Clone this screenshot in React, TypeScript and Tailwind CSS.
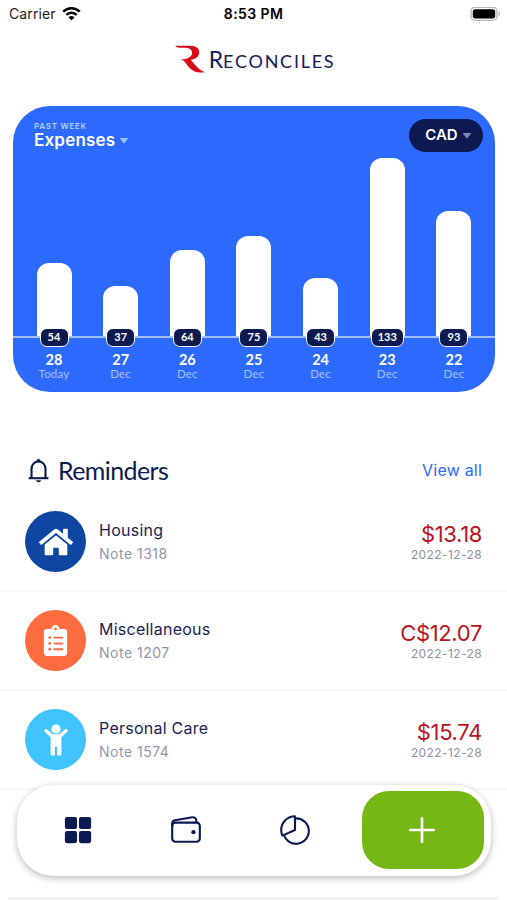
import React, { ReactElement } from 'react';
import { FaClipboardList, FaHome } from 'react-icons/fa';
import { IoAdd, IoGrid, IoPieChartOutline, IoWalletOutline } from 'react-icons/io5';

const CaretDown = ({ className }: { className: string }) => (
  <svg className={className} viewBox="0 0 10 6" fill="currentColor">
    <path d="M0.6 0h8.8L5 5.8z" />
  </svg>
);

const WifiIcon = () => (
  <svg className="-mt-[2px] ml-[6px] h-[15px] w-[19px]" viewBox="0 0 19 15" fill="none" stroke="#000" strokeWidth={2.5}>
    <path d="M1.2 5.6C5.9 1 13.1 1 17.8 5.6" />
    <path d="M4.3 8.8C7.3 5.9 11.7 5.9 14.7 8.8" />
    <path d="M9.5 14.4L6.5 11.3C8.2 9.7 10.8 9.7 12.5 11.3Z" fill="#000" stroke="none" />
  </svg>
);

const BatteryIcon = () => (
  <svg className="h-[15px] w-[31px]" viewBox="0 0 31 15">
    <rect x="1" y="0.4" width="26" height="13" rx="4" fill="#fff" stroke="#b8b8b8" strokeWidth={1.4} />
    <rect x="2.8" y="2.2" width="22.4" height="9.4" rx="2.4" fill="#000" />
    <path d="M28.6 4.7C30.6 5.3 30.6 8.5 28.6 9.1Z" fill="#b8b8b8" />
  </svg>
);

const BellIcon = () => (
  <svg className="h-[25px] w-[21px]" viewBox="0 0 21 25" fill="none" stroke="currentColor" strokeWidth={2.1}>
    <path d="M0.6 20.2H20.4" />
    <path d="M3.5 20V11C3.5 6.8 6.4 3.4 10.5 3.4C14.6 3.4 17.5 6.8 17.5 11V20" />
    <path d="M8.2 3.6L10.5 0.8L12.8 3.6Z" fill="currentColor" strokeWidth={0.8} />
    <path d="M8 22.2H13C12.6 24.8 8.4 24.8 8 22.2Z" fill="currentColor" stroke="none" />
  </svg>
);

const PersonIcon = () => (
  <svg className="h-[32px] w-[24px]" viewBox="0 0 24 32" fill="currentColor">
    <circle cx="12" cy="5" r="4.6" />
    <path
      d="M2.1 6.7L7.9 12H16.1L21.9 6.7"
      fill="none"
      stroke="currentColor"
      strokeWidth={3.4}
      strokeLinecap="round"
      strokeLinejoin="round"
    />
    <path d="M6.6 11H17.4V30.2C17.4 31.9 13 31.9 13 30.2V22.8H11V30.2C11 31.9 6.6 31.9 6.6 30.2Z" />
  </svg>
);

const StatusBar = () => (
  <div className="grid h-7 grid-cols-3 items-center pl-[9px] pr-[9px] text-[14px]">
    <div className="flex items-center">
      <span className="-mt-px tracking-[0.1px] text-[#222]">Carrier</span>
      <WifiIcon />
    </div>
    <span className="-mt-px text-center text-[14px] font-semibold tracking-[0.4px] text-black">8:53 PM</span>
    <div className="-mr-[3px] flex justify-end">
      <BatteryIcon />
    </div>
  </div>
);

const Logo = () => (
  <div className="flex h-[62px] items-center justify-center pl-[2px]">
    <svg className="h-[28px] w-[32px]" viewBox="0 0 32 29" fill="#d80a18">
      <path d="M0.5 0.8H16C22 0.8 25.8 3.4 25.6 7.8C25.4 12.2 21.5 14.7 17 15.5C20 18.8 24 25.5 31.5 28.2C24.5 29.3 19.5 28 16 24.2C12.3 20 11 16.3 6.5 14.7C12.5 15.2 18.2 12.6 18.2 8C18.2 4 14 2.8 9.5 2.8C5.8 2.8 2 3 0.5 0.8Z" />
    </svg>
    <span className="ml-[3px] font-['Lato',sans-serif] text-[23px] leading-none text-[#15205c]">
      R<span className="text-[18px] tracking-[1.75px]">ECONCILES</span>
    </span>
  </div>
);

const days = [
  { value: 54, height: 73, day: '28', label: 'Today' },
  { value: 37, height: 50, day: '27', label: 'Dec' },
  { value: 64, height: 86, day: '26', label: 'Dec' },
  { value: 75, height: 100, day: '25', label: 'Dec' },
  { value: 43, height: 58, day: '24', label: 'Dec' },
  { value: 133, height: 178, day: '23', label: 'Dec' },
  { value: 93, height: 125, day: '22', label: 'Dec' },
];

const ExpensesCard = () => (
  <div className="relative mx-[13px] mr-3 mt-4 flex h-[286px] flex-col rounded-[37px] bg-[#2b6afd]">
    <div className="absolute inset-x-0 top-0 flex items-start justify-between pl-[21px] pr-3 pt-[13px] text-white">
      <div className="pt-[3px]">
        <div className="text-[8px] font-semibold leading-[9px] tracking-[0.75px] text-[#b9d0ff]">PAST WEEK</div>
        <div className="flex items-center text-[17px] font-semibold leading-[19px] tracking-[0.2px]">
          Expenses
          <CaretDown className="ml-1 h-[6px] w-[10px] text-[#9dbcff]" />
        </div>
      </div>
      <div className="flex h-[33px] w-[74px] items-center justify-center rounded-full bg-[#0c1a51] pl-[5px] text-[15px] font-semibold">
        CAD
        <CaretDown className="ml-1 h-[6px] w-[10px] text-[#7f8bb8]" />
      </div>
    </div>
    <div className="flex h-[232px] items-end justify-between border-b-2 border-[#a0bffe] px-[23.5px]">
      {days.map((item) => (
        <div key={item.day} className="w-[35px] rounded-t-[12px] bg-white" style={{ height: item.height }} />
      ))}
    </div>
    <div className="relative -mt-[10px] flex justify-between px-[23.5px] font-['Lato',sans-serif]">
      {days.map((item) => (
        <div key={item.day} className="flex w-[35px] flex-col items-center">
          <div className="flex h-[19px] min-w-[29px] items-center justify-center rounded-[7px] border border-white bg-[#0c1a51] px-[6px] text-[11px] font-bold text-white">
            {item.value}
          </div>
          <div className="mt-[4px] text-[14.5px] font-bold leading-[18px] text-white">{item.day}</div>
          <div className="-mt-px text-[11.5px] leading-[12px] tracking-[0.2px] text-[#a5c2ff]">{item.label}</div>
        </div>
      ))}
    </div>
  </div>
);

const reminders: { icon: ReactElement; color: string; title: string; note: string; amount: string }[] = [
  {
    icon: <FaHome className="h-[34px] w-[34px]" />,
    color: 'bg-[#0d47a1]',
    title: 'Housing',
    note: 'Note 1318',
    amount: '$13.18',
  },
  {
    icon: <FaClipboardList className="h-[31px] w-[31px]" />,
    color: 'bg-[#ff6d3f]',
    title: 'Miscellaneous',
    note: 'Note 1207',
    amount: 'C$12.07',
  },
  {
    icon: <PersonIcon />,
    color: 'bg-[#40c4ff]',
    title: 'Personal Care',
    note: 'Note 1574',
    amount: '$15.74',
  },
];

const Reminders = () => (
  <div className="mt-[60px]">
    <div className="flex h-[36px] items-center justify-between px-[25px]">
      <div className="flex items-center pl-[3px] text-[#0c1a51]">
        <BellIcon />
        <h2 className="ml-[9px] font-['Lato',sans-serif] text-[25px] leading-none tracking-[-0.6px]">Reminders</h2>
      </div>
      <a className="text-[16px] tracking-[0.2px] text-[#2b6afd]">View all</a>
    </div>
    <div className="mt-[5px]">
      {reminders.map((item) => (
        <div key={item.title} className="flex h-[99px] items-center border-b-2 border-[#f8f8f9] px-[25px]">
          <div className={`flex h-[61px] w-[61px] items-center justify-center rounded-full text-white ${item.color}`}>
            {item.icon}
          </div>
          <div className="ml-[13px] flex-1">
            <div className="text-[16px] leading-[22px] tracking-[0.25px] text-[#1a2358]">{item.title}</div>
            <div className="mt-[3px] text-[14px] leading-[20px] tracking-[0.5px] text-[#9396ac]">{item.note}</div>
          </div>
          <div className="pt-[2px] text-right">
            <div className="text-[22px] leading-[24px] tracking-[-0.35px] text-[#b9141f]">{item.amount}</div>
            <div className="text-[12px] leading-[17px] tracking-[0.4px] text-[#8e92a4]">2022-12-28</div>
          </div>
        </div>
      ))}
    </div>
  </div>
);

const TabBar = () => (
  <div className="absolute bottom-6 left-[17px] right-4 flex h-[91px] items-center rounded-[37px] bg-white pb-px pr-[7px] text-[#0c1a51] shadow-[0_2px_7px_rgba(0,0,0,0.28)]">
    <div className="flex flex-1 items-center justify-between pl-[46px] pr-[50px]">
      <IoGrid className="h-[30px] w-[30px]" />
      <IoWalletOutline className="h-[34px] w-[34px]" />
      <IoPieChartOutline className="h-[34px] w-[34px]" />
    </div>
    <button className="flex h-[78px] w-[122px] items-center justify-center rounded-[27px] bg-[#75b814] pr-[3px] text-white">
      <IoAdd className="h-[42px] w-[42px]" />
    </button>
  </div>
);

export default function App(): ReactElement {
  return (
    <div className="relative h-[900px] w-[507px] overflow-hidden bg-white font-['Inter',sans-serif]">
      <StatusBar />
      <Logo />
      <ExpensesCard />
      <Reminders />
      <TabBar />
      <div className="absolute inset-x-2 bottom-0 h-[3px] bg-[#f3f3f3]" />
    </div>
  );
}
